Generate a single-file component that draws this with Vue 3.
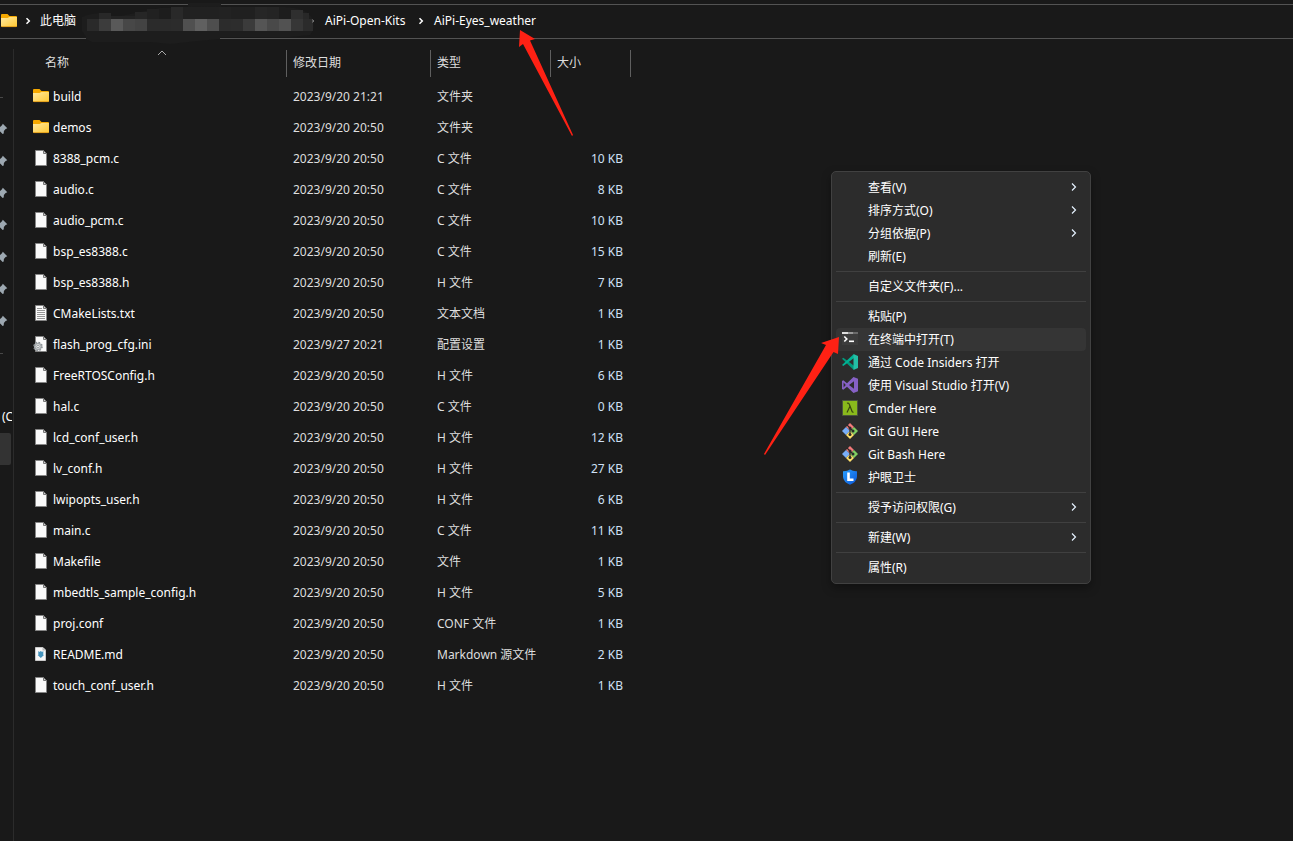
<script setup>
const mosaicTop = [
  [99, 13, 12, 6, '#282828'], [111, 16, 12, 3, '#222222'], [123, 16, 12, 3, '#222222'], [135, 12, 12, 7, '#262626'],
  [147, 9, 12, 10, '#212121'], [171, 7, 12, 12, '#292929'], [183, 7, 36, 12, '#212121'], [219, 7, 12, 12, '#222222'],
  [231, 7, 12, 12, '#202020'], [243, 7, 12, 12, '#202020'], [255, 7, 12, 12, '#262626'], [267, 7, 12, 12, '#242424'],
  [291, 10, 12, 9, '#2f2f2f'], [303, 13, 6, 6, '#282828'],
]
const mosaicColors = ['#2a2a2a', '#3c3c3c', '#595959', '#474747', '#434343', '#2b2b2b', '#2b2b2b', '#2c2c2c', '#505050', '#606060', '#4e4e4e', '#2c2c2c', '#2d2d2d', '#3b3b3b', '#555555', '#494949', '#525252', '#363636', '#2b2b2b']

const files = [
  ['build', '2023/9/20 21:21', '文件夹', '', 'folder'],
  ['demos', '2023/9/20 20:50', '文件夹', '', 'folder'],
  ['8388_pcm.c', '2023/9/20 20:50', 'C 文件', '10 KB', 'file'],
  ['audio.c', '2023/9/20 20:50', 'C 文件', '8 KB', 'file'],
  ['audio_pcm.c', '2023/9/20 20:50', 'C 文件', '10 KB', 'file'],
  ['bsp_es8388.c', '2023/9/20 20:50', 'C 文件', '15 KB', 'file'],
  ['bsp_es8388.h', '2023/9/20 20:50', 'H 文件', '7 KB', 'file'],
  ['CMakeLists.txt', '2023/9/20 20:50', '文本文档', '1 KB', 'text'],
  ['flash_prog_cfg.ini', '2023/9/27 20:21', '配置设置', '1 KB', 'config'],
  ['FreeRTOSConfig.h', '2023/9/20 20:50', 'H 文件', '6 KB', 'file'],
  ['hal.c', '2023/9/20 20:50', 'C 文件', '0 KB', 'file'],
  ['lcd_conf_user.h', '2023/9/20 20:50', 'H 文件', '12 KB', 'file'],
  ['lv_conf.h', '2023/9/20 20:50', 'H 文件', '27 KB', 'file'],
  ['lwipopts_user.h', '2023/9/20 20:50', 'H 文件', '6 KB', 'file'],
  ['main.c', '2023/9/20 20:50', 'C 文件', '11 KB', 'file'],
  ['Makefile', '2023/9/20 20:50', '文件', '1 KB', 'file'],
  ['mbedtls_sample_config.h', '2023/9/20 20:50', 'H 文件', '5 KB', 'file'],
  ['proj.conf', '2023/9/20 20:50', 'CONF 文件', '1 KB', 'file'],
  ['README.md', '2023/9/20 20:50', 'Markdown 源文件', '2 KB', 'markdown'],
  ['touch_conf_user.h', '2023/9/20 20:50', 'H 文件', '1 KB', 'file'],
]

const menuGroups = [
  [{ t: '查看(V)', sub: true }, { t: '排序方式(O)', sub: true }, { t: '分组依据(P)', sub: true }, { t: '刷新(E)' }],
  [{ t: '自定义文件夹(F)...' }],
  [
    { t: '粘贴(P)' }, { t: '在终端中打开(T)', icon: 'terminal', active: true },
    { t: '通过 Code Insiders 打开', icon: 'code' }, { t: '使用 Visual Studio 打开(V)', icon: 'vs' },
    { t: 'Cmder Here', icon: 'cmder' }, { t: 'Git GUI Here', icon: 'git' },
    { t: 'Git Bash Here', icon: 'git' }, { t: '护眼卫士', icon: 'shield' },
  ],
  [{ t: '授予访问权限(G)', sub: true }],
  [{ t: '新建(W)', sub: true }],
  [{ t: '属性(R)' }],
]
</script>

<template>
  <div class="explorer">
    <svg class="defs" aria-hidden="true">
      <defs>
        <linearGradient id="folderFill" x1="0" y1="0" x2="1" y2="1">
          <stop offset="0" stop-color="#ffe9a0" /><stop offset="1" stop-color="#ffc831" />
        </linearGradient>
        <linearGradient id="shieldFill" x1="0" y1="0" x2="1" y2="1">
          <stop offset="0" stop-color="#2aa0ff" /><stop offset="1" stop-color="#0b55d8" />
        </linearGradient>
        <symbol id="folder" viewBox="0 0 16 16">
          <path d="M0 2Q0 1 1 1H6.500L8.500 3H15Q16 3 16 4V8H0Z" fill="#f5a800" />
          <path d="M0 5H6.500L8.500 4H16V13Q16 14 15 14H1Q0 14 0 13Z" fill="url(#folderFill)" />
          <path d="M0 13Q.2 13.600 1 13.600H15Q15.800 13.600 16 13" fill="none" stroke="#dc9410" stroke-width=".8" />
        </symbol>
        <symbol id="file" viewBox="0 0 16 16">
          <path d="M2.500.5H10.500L13.500 3.500V15.500H2.500Z" fill="#fafafa" stroke="#858585" />
          <path d="M10.500.5V3.500H13.500Z" fill="#d0d0d0" stroke="#777" />
        </symbol>
        <symbol id="text" viewBox="0 0 16 16">
          <use href="#file" />
          <path d="M4 3.500H9M4 5.500H12M4 7.500H12M4 9.500H12M4 11.500H12M4 13.500H12" stroke="#969696" />
        </symbol>
        <symbol id="config" viewBox="0 0 16 16">
          <use href="#file" />
          <circle cx="5" cy="10.500" r="4" fill="#c4c8ca" stroke="#8a9094" stroke-width="1.600" stroke-dasharray="1.600 1.540" />
          <circle cx="5" cy="10.500" r="3" fill="#d4d7d9" stroke="#8b9194" stroke-width=".7" />
          <circle cx="5" cy="10.500" r="1.200" fill="#fff" stroke="#80868a" stroke-width=".7" />
        </symbol>
        <symbol id="markdown" viewBox="0 0 16 16">
          <path d="M2.500 1.500H10L12.500 4V14.500H2.500Z" fill="#f7f7f7" stroke="#c9c9c9" />
          <path d="M9.500 1.500V4.500H12.500Z" fill="#bbb" />
          <path d="M5.300 5L6.500 6L7.800 5L9.100 6L10.300 5V9H11L7.800 12L4.600 9H5.300Z" fill="#4594bd" />
        </symbol>
        <symbol id="pin" viewBox="0 0 12 12">
          <path d="M6.800.8L11.300 5.300L9.600 6.100L7.900 7.900L7.700 10.600L6.600 11L4.200 8.600L1.200 11.700L.3 10.900L3.300 7.800L.8 5.300L1.400 4.100L4.100 4.100L6 2.300Z" fill="#9da8b1" />
        </symbol>
        <symbol id="terminal" viewBox="0 0 16 16">
          <path d="M0 2H16V14H0Z" fill="#3c3c3c" />
          <path d="M0 1H6V3H0Z" fill="#ddd" /><path d="M6 1H11V3H6Z" fill="#999" /><path d="M11 1H16V3H11Z" fill="#6a6a6a" />
          <path d="M2.300 5.500L4.800 8L2.300 10.500" fill="none" stroke="#fff" stroke-width="1.600" /><path d="M7 10.300H12" stroke="#fff" stroke-width="1.600" />
        </symbol>
        <symbol id="code" viewBox="0 0 16 16">
          <path d="M0 4.800L1.300 3.800L12 11.800V15.500L11 15.300Z" fill="#009a7c" />
          <path d="M0 11L1.300 12L12 4V.5L11 .7Z" fill="#00b294" />
          <path d="M11.500 0L16 2V14L11.500 16Z" fill="#24bfa5" />
        </symbol>
        <symbol id="vs" viewBox="0 0 16 16">
          <path fill-rule="evenodd" d="M0 4L1.300 3.200L5 6.200L11.500 0L16 1.800V14.200L11.500 16L5 9.800L1.300 12.800L0 12ZM1.600 5.600V10.400L3.800 8ZM7 8L12 11.800V4.200Z" fill="#8661c5" />
        </symbol>
        <symbol id="cmder" viewBox="0 0 16 16">
          <path d="M.5.5H15.500V15.500H.5Z" fill="#89b91c" stroke="#4a553c" />
          <path d="M5 3.200Q6.800 2.600 7.400 4.500L10 11.300Q10.400 12.500 11.500 12M7.900 6.400L5 12.500" fill="none" stroke="#37460f" stroke-width="1.200" />
        </symbol>
        <symbol id="git" viewBox="0 0 16 16">
          <path d="M8 0L12 4L8 8L4 4Z" fill="#f47a7a" /><path d="M4 4L8 8L4 12L0 8Z" fill="#78adf8" />
          <path d="M12 4L16 8L12 12L8 8Z" fill="#80cf62" /><path d="M8 8L12 12L8 16L4 12Z" fill="#ffe06a" />
          <path d="M5 2L8 5V11.500M8 5L11 8" fill="none" stroke="#292929" stroke-width="1.200" />
          <circle cx="8" cy="5" r="1.500" fill="#292929" /><circle cx="8" cy="11.500" r="1.500" fill="#292929" /><circle cx="11" cy="8" r="1.500" fill="#292929" />
        </symbol>
        <symbol id="shield" viewBox="0 0 16 16">
          <path d="M8 .5Q11 2.500 15 2.300V8Q14.500 13.200 8 15.700Q1.500 13.200 1 8V2.300Q5 2.500 8 .5Z" fill="url(#shieldFill)" />
          <path d="M6.500 3.500V10.800H11.500" fill="none" stroke="#fff" stroke-width="2.600" />
        </symbol>
      </defs>
    </svg>

    <nav class="address" aria-label="路径">
      <svg class="icon root"><use href="#folder" /></svg>
      <svg class="crumb-arrow" viewBox="0 0 6 8"><path d="M1.500 1.200L4.300 4L1.500 6.800" /></svg>
      <a href="#" class="pc">此电脑</a>
      <svg class="mosaic" viewBox="80 0 234 44" aria-hidden="true">
        <path d="M188 3H221V7H188Z" fill="#1d1d1d" />
        <path d="M82 17Q88 14 99 13L111 18L135 13L160 8Q200 6 230 7H285Q306 8 312 18Q316 28 310 35L290 37L220 37V39Q196 41 170 44L150 42H92L86 39V37L82 31Z" fill="#1d1d1d" />
        <rect v-for="(r, i) in mosaicTop" :key="'t' + i" :x="r[0]" :y="r[1]" :width="r[2]" :height="r[3]" :fill="r[4]" />
        <rect v-for="(c, i) in mosaicColors" :key="'b' + i" :x="87 + i * 12" y="19" :width="i === 18 ? 10 : 12" height="12" :fill="c" />
        <path d="M312.500 20L313.600 21L312.500 22" fill="none" stroke="#ccc" />
      </svg>
      <a href="#" class="kits">AiPi-Open-Kits</a>
      <svg class="crumb-arrow" viewBox="0 0 6 8"><path d="M1.500 1.200L4.300 4L1.500 6.800" /></svg>
      <a href="#" class="here">AiPi-Eyes_weather</a>
    </nav>

    <div class="body">
      <aside class="side">
        <hr class="side-line" />
        <div class="pins"><svg v-for="n in 7" :key="n" class="pin"><use href="#pin" /></svg></div>
        <hr class="side-line" />
        <div class="drive">(C</div>
        <div class="selected"></div>
      </aside>

      <main class="content">
        <table class="files">
          <colgroup><col class="c-name" /><col class="c-date" /><col class="c-type" /><col class="c-size" /></colgroup>
          <thead>
            <tr>
              <th scope="col" class="name-head"><button>名称</button>
                <svg class="sort" viewBox="0 0 10 6"><path d="M1 5L5 1L9 5" /></svg>
              </th>
              <th scope="col"><button>修改日期</button></th>
              <th scope="col"><button>类型</button></th>
              <th scope="col"><button>大小</button></th>
            </tr>
          </thead>
          <tbody>
            <tr v-for="f in files" :key="f[0]">
              <td><span class="name"><svg class="icon"><use :href="'#' + f[4]" /></svg><span>{{ f[0] }}</span></span></td>
              <td>{{ f[1] }}</td>
              <td>{{ f[2] }}</td>
              <td class="size">{{ f[3] }}</td>
            </tr>
          </tbody>
        </table>
      </main>
    </div>

    <div class="menu" role="menu">
      <div v-for="(g, gi) in menuGroups" :key="gi" class="group" role="group">
        <button v-for="m in g" :key="m.t" class="item" :class="{ active: m.active }" role="menuitem">
          <svg v-if="m.icon" class="icon"><use :href="'#' + m.icon" /></svg>
          <span v-else class="icon"></span>
          <span class="label">{{ m.t }}</span>
          <svg v-if="m.sub" class="sub" viewBox="0 0 6 8"><path d="M1 .5L4.500 4L1 7.500" /></svg>
        </button>
      </div>
    </div>

    <svg class="pointer pointer-top" viewBox="0 0 55 107" aria-hidden="true">
      <path d="M1 0L16 9L11 10.500L54 105L53 106L4 14L0 17Z" />
    </svg>
    <svg class="pointer pointer-menu" viewBox="0 0 76 118" aria-hidden="true">
      <path d="M75 0L74 17L69.500 15L1 118L0 117L62 8L57 6Z" />
    </svg>
  </div>
</template>

<style>
html, body { margin: 0; background: #191919; }
</style>

<style scoped>
.explorer {
  position: relative;
  display: flex;
  flex-direction: column;
  min-height: 100vh;
  box-sizing: border-box;
  padding-top: 4px;
  overflow: hidden;
  background: #191919;
  color: #fff;
  font: 12px/20px "Noto Sans", "Noto Sans CJK SC", sans-serif;
}
.defs { position: absolute; width: 0; height: 0; }
a { color: inherit; text-decoration: none; }
button { padding: 0; border: 0; background: none; color: inherit; font: inherit; text-align: left; }
.icon { flex: none; display: block; width: 16px; height: 16px; }

.address {
  display: flex;
  align-items: center;
  height: 31px;
  padding-bottom: 2px;
  border-top: 1px solid #535353;
  border-bottom: 1px solid #535353;
  white-space: nowrap;
}
.root { margin: 0 8px 0 1px; }
.crumb-arrow { flex: none; width: 6px; height: 8px; }
.crumb-arrow path { fill: none; stroke: #fff; stroke-width: 1.5; }
.pc { margin-left: 9px; }
.mosaic { flex: none; align-self: flex-start; width: 234px; height: 44px; margin: -5px 11px 0 4px; }
.kits { min-width: 84px; }
.kits + .crumb-arrow { margin: 0 10px 0 9px; }

.body { flex: 1; display: flex; }
.side { flex: none; box-sizing: border-box; width: 14px; border-right: 1px solid #2b2b2b; margin-top: 10px; padding-top: 48px; overflow: hidden; }
.side-line { width: 3px; height: 1px; margin: 0; border: 0; background: #484848; }
.pins { display: flex; flex-direction: column; gap: 20px; padding: 25px 0 26px; }
.pin { display: block; width: 12px; height: 12px; margin-left: -4px; }
.drive { width: 10px; margin: 53px 0 0 2px; overflow: hidden; }
.selected { width: 11px; height: 32px; margin-top: 6px; border-radius: 0 2px 2px 0; background: #333; }

.content { flex: 1; padding: 11px 0 0 19px; }
.files { table-layout: fixed; width: 598px; border-collapse: separate; border-spacing: 0; }
.c-name { width: 254px; }
.c-date { width: 144px; }
.c-type { width: 120px; }
.c-size { width: 80px; }
th, td { box-sizing: border-box; padding: 0 0 0 6px; text-align: left; white-space: nowrap; font-weight: 400; color: #dedede; }
th { position: relative; height: 27px; padding-bottom: 2px; border-right: 1px solid #5f5f5f; }
th.name-head { padding-left: 12px; }
.sort { position: absolute; left: 124px; top: 0; width: 10px; height: 6px; }
.sort path { fill: none; stroke: #aaa; }
td { height: 31px; }
td:first-child { padding-left: 0; color: #fff; }
tbody::before { content: ""; display: block; height: 4px; }
.name { display: flex; align-items: center; gap: 4px; }
.name .icon { margin-bottom: 2px; }
td.size { padding-right: 8px; text-align: right; color: #cfe0f5; }

.menu {
  position: absolute;
  left: 831px;
  top: 171px;
  width: 260px;
  box-sizing: border-box;
  padding: 4px;
  border: 1px solid #414141;
  border-radius: 5px;
  background: #2c2c2c;
  box-shadow: 0 4px 10px rgba(0, 0, 0, .35);
}
.group + .group { margin-top: 3px; padding-top: 3px; border-top: 1px solid #404040; }
.item { display: flex; align-items: center; width: 100%; height: 23px; padding: 0 9px 0 6px; border-radius: 4px; white-space: nowrap; }
.item .icon { margin: 0 10px 2px 0; }
.active { background: #353535; }
.label { flex: 1; }
.sub { width: 6px; height: 8px; margin-bottom: 2px; }
.sub path { fill: none; stroke: #e5f2ff; stroke-width: 1.2; }

.pointer { position: absolute; pointer-events: none; }
.pointer path { fill: #ff2114; }
.pointer-top { left: 519px; top: 30px; width: 55px; height: 107px; }
.pointer-menu { left: 764px; top: 337px; width: 76px; height: 118px; }
</style>
